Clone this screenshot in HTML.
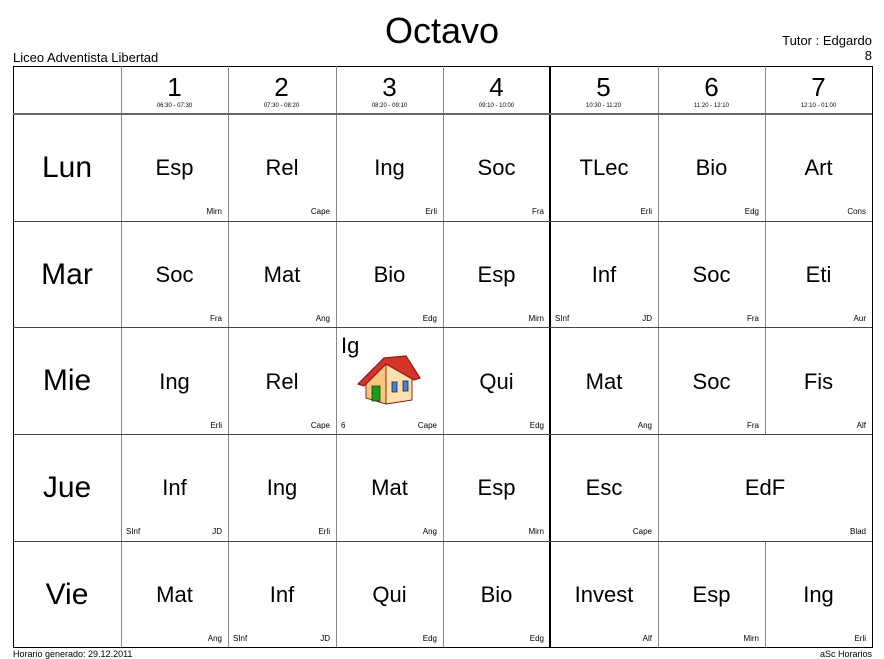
<!DOCTYPE html>
<html><head><meta charset="utf-8"><style>
*{margin:0;padding:0;box-sizing:border-box}
body{width:884px;height:653px;background:#fff;font-family:"Liberation Sans",Arial,sans-serif;color:#000;position:relative;overflow:hidden}
.a{position:absolute}
.c{position:absolute;height:107px}
.s{position:absolute;left:0;right:0;top:41px;text-align:center;font-size:22px;line-height:26px}
.t{position:absolute;right:6px;bottom:5px;font-size:8px;line-height:9px}
.l{position:absolute;left:5px;bottom:5px;font-size:8px;line-height:9px}
.d{position:absolute;left:13px;width:108px;text-align:center;font-size:30px;line-height:34px}
.h{position:absolute;top:73px;width:107px;text-align:center;font-size:26px;line-height:28px}
.tm{position:absolute;top:103px;width:107px;text-align:center;font-size:6px;line-height:7px}
.vl{position:absolute;top:66px;height:581px;width:1px;background:#888}
.hl{position:absolute;left:13px;width:859px;height:1px;background:#444}
</style></head><body>
<div class="a" style="left:0;width:884px;top:11px;text-align:center;font-size:36px;line-height:40px">Octavo</div>
<div class="a" style="left:13px;top:50px;font-size:13px;line-height:15px">Liceo Adventista Libertad</div>
<div class="a" style="right:12px;top:33px;font-size:13px;line-height:15px;text-align:right">Tutor : Edgardo<br>8</div>
<div class="a" style="left:13px;top:66px;width:860px;height:582px;border:1px solid #000"></div>
<div class="vl" style="left:121px"></div><div class="vl" style="left:228px"></div><div class="vl" style="left:336px"></div><div class="vl" style="left:443px"></div>
<div class="vl" style="left:549px;width:2px;background:#000"></div>
<div class="vl" style="left:658px"></div><div class="vl" style="left:765px;height:48px"></div><div class="vl" style="left:765px;top:114px;height:320px"></div><div class="vl" style="left:765px;top:541px;height:106px"></div>
<div class="hl" style="top:113px;height:2px;background:#666"></div>
<div class="hl" style="top:221px"></div><div class="hl" style="top:327px"></div><div class="hl" style="top:434px"></div><div class="hl" style="top:541px"></div>

<div class="h" style="left:121px">1</div><div class="tm" style="left:121px">06:30 - 07:30</div>
<div class="h" style="left:228px">2</div><div class="tm" style="left:228px">07:30 - 08:20</div>
<div class="h" style="left:336px">3</div><div class="tm" style="left:336px">08:20 - 09:10</div>
<div class="h" style="left:443px">4</div><div class="tm" style="left:443px">09:10 - 10:00</div>
<div class="h" style="left:550px">5</div><div class="tm" style="left:550px">10:30 - 11:20</div>
<div class="h" style="left:658px">6</div><div class="tm" style="left:658px">11:20 - 12:10</div>
<div class="h" style="left:765px">7</div><div class="tm" style="left:765px">12:10 - 01:00</div>

<div class="d" style="top:151px">Lun</div>
<div class="d" style="top:258px">Mar</div>
<div class="d" style="top:364px">Mie</div>
<div class="d" style="top:471px">Jue</div>
<div class="d" style="top:578px">Vie</div>

<!-- Lun -->
<div class="c" style="left:121px;top:114px;width:107px"><span class="s">Esp</span><span class="t">Mirn</span></div>
<div class="c" style="left:228px;top:114px;width:108px"><span class="s">Rel</span><span class="t">Cape</span></div>
<div class="c" style="left:336px;top:114px;width:107px"><span class="s">Ing</span><span class="t">Erli</span></div>
<div class="c" style="left:443px;top:114px;width:107px"><span class="s">Soc</span><span class="t">Fra</span></div>
<div class="c" style="left:550px;top:114px;width:108px"><span class="s">TLec</span><span class="t">Erli</span></div>
<div class="c" style="left:658px;top:114px;width:107px"><span class="s">Bio</span><span class="t">Edg</span></div>
<div class="c" style="left:765px;top:114px;width:107px"><span class="s">Art</span><span class="t">Cons</span></div>
<!-- Mar -->
<div class="c" style="left:121px;top:221px;width:107px"><span class="s">Soc</span><span class="t">Fra</span></div>
<div class="c" style="left:228px;top:221px;width:108px"><span class="s">Mat</span><span class="t">Ang</span></div>
<div class="c" style="left:336px;top:221px;width:107px"><span class="s">Bio</span><span class="t">Edg</span></div>
<div class="c" style="left:443px;top:221px;width:107px"><span class="s">Esp</span><span class="t">Mirn</span></div>
<div class="c" style="left:550px;top:221px;width:108px"><span class="s">Inf</span><span class="l">SInf</span><span class="t">JD</span></div>
<div class="c" style="left:658px;top:221px;width:107px"><span class="s">Soc</span><span class="t">Fra</span></div>
<div class="c" style="left:765px;top:221px;width:107px"><span class="s">Eti</span><span class="t">Aur</span></div>
<!-- Mie -->
<div class="c" style="left:121px;top:328px;width:107px"><span class="s">Ing</span><span class="t">Erli</span></div>
<div class="c" style="left:228px;top:328px;width:108px"><span class="s">Rel</span><span class="t">Cape</span></div>
<div class="c" style="left:336px;top:328px;width:107px"><span class="a" style="left:5px;top:5px;font-size:22px;line-height:26px">Ig</span>
<svg class="a" style="left:20px;top:26px" width="66" height="54" viewBox="0 0 66 54">
<path d="M10 26 L30 10 L56 22 L56 46 L30 50 L10 44 Z" fill="#fdc47c" stroke="#8a2a10" stroke-width="1"/>
<path d="M30 10 L56 22 L56 46 L30 50 Z" fill="#fde0b0" stroke="#8a2a10" stroke-width="1"/>
<path d="M2 30 L28 4 L50 2 L64 24 L58 26 L30 10 L8 32 Z" fill="#d8332a" stroke="#8a1a14" stroke-width="1.2"/>
<rect x="16" y="32" width="8" height="15" fill="#1e9a20" stroke="#0a4a10" stroke-width="0.8"/>
<rect x="36" y="28" width="5" height="10" fill="#3f86e0" stroke="#223" stroke-width="0.8"/>
<rect x="47" y="27" width="5" height="10" fill="#3f86e0" stroke="#223" stroke-width="0.8"/>
</svg>
<span class="l">6</span><span class="t">Cape</span></div>
<div class="c" style="left:443px;top:328px;width:107px"><span class="s">Qui</span><span class="t">Edg</span></div>
<div class="c" style="left:550px;top:328px;width:108px"><span class="s">Mat</span><span class="t">Ang</span></div>
<div class="c" style="left:658px;top:328px;width:107px"><span class="s">Soc</span><span class="t">Fra</span></div>
<div class="c" style="left:765px;top:328px;width:107px"><span class="s">Fis</span><span class="t">Alf</span></div>
<!-- Jue -->
<div class="c" style="left:121px;top:434px;width:107px"><span class="s">Inf</span><span class="l">SInf</span><span class="t">JD</span></div>
<div class="c" style="left:228px;top:434px;width:108px"><span class="s">Ing</span><span class="t">Erli</span></div>
<div class="c" style="left:336px;top:434px;width:107px"><span class="s">Mat</span><span class="t">Ang</span></div>
<div class="c" style="left:443px;top:434px;width:107px"><span class="s">Esp</span><span class="t">Mirn</span></div>
<div class="c" style="left:550px;top:434px;width:108px"><span class="s">Esc</span><span class="t">Cape</span></div>
<div class="c" style="left:658px;top:434px;width:214px"><span class="s">EdF</span><span class="t">Blad</span></div>
<!-- Vie -->
<div class="c" style="left:121px;top:541px;width:107px"><span class="s">Mat</span><span class="t">Ang</span></div>
<div class="c" style="left:228px;top:541px;width:108px"><span class="s">Inf</span><span class="l">SInf</span><span class="t">JD</span></div>
<div class="c" style="left:336px;top:541px;width:107px"><span class="s">Qui</span><span class="t">Edg</span></div>
<div class="c" style="left:443px;top:541px;width:107px"><span class="s">Bio</span><span class="t">Edg</span></div>
<div class="c" style="left:550px;top:541px;width:108px"><span class="s">Invest</span><span class="t">Alf</span></div>
<div class="c" style="left:658px;top:541px;width:107px"><span class="s">Esp</span><span class="t">Mirn</span></div>
<div class="c" style="left:765px;top:541px;width:107px"><span class="s">Ing</span><span class="t">Erli</span></div>

<div class="a" style="left:13px;top:649px;font-size:9px;line-height:10px">Horario generado: 29.12.2011</div>
<div class="a" style="right:12px;top:649px;font-size:9px;line-height:10px">aSc Horarios</div>
</body></html>
